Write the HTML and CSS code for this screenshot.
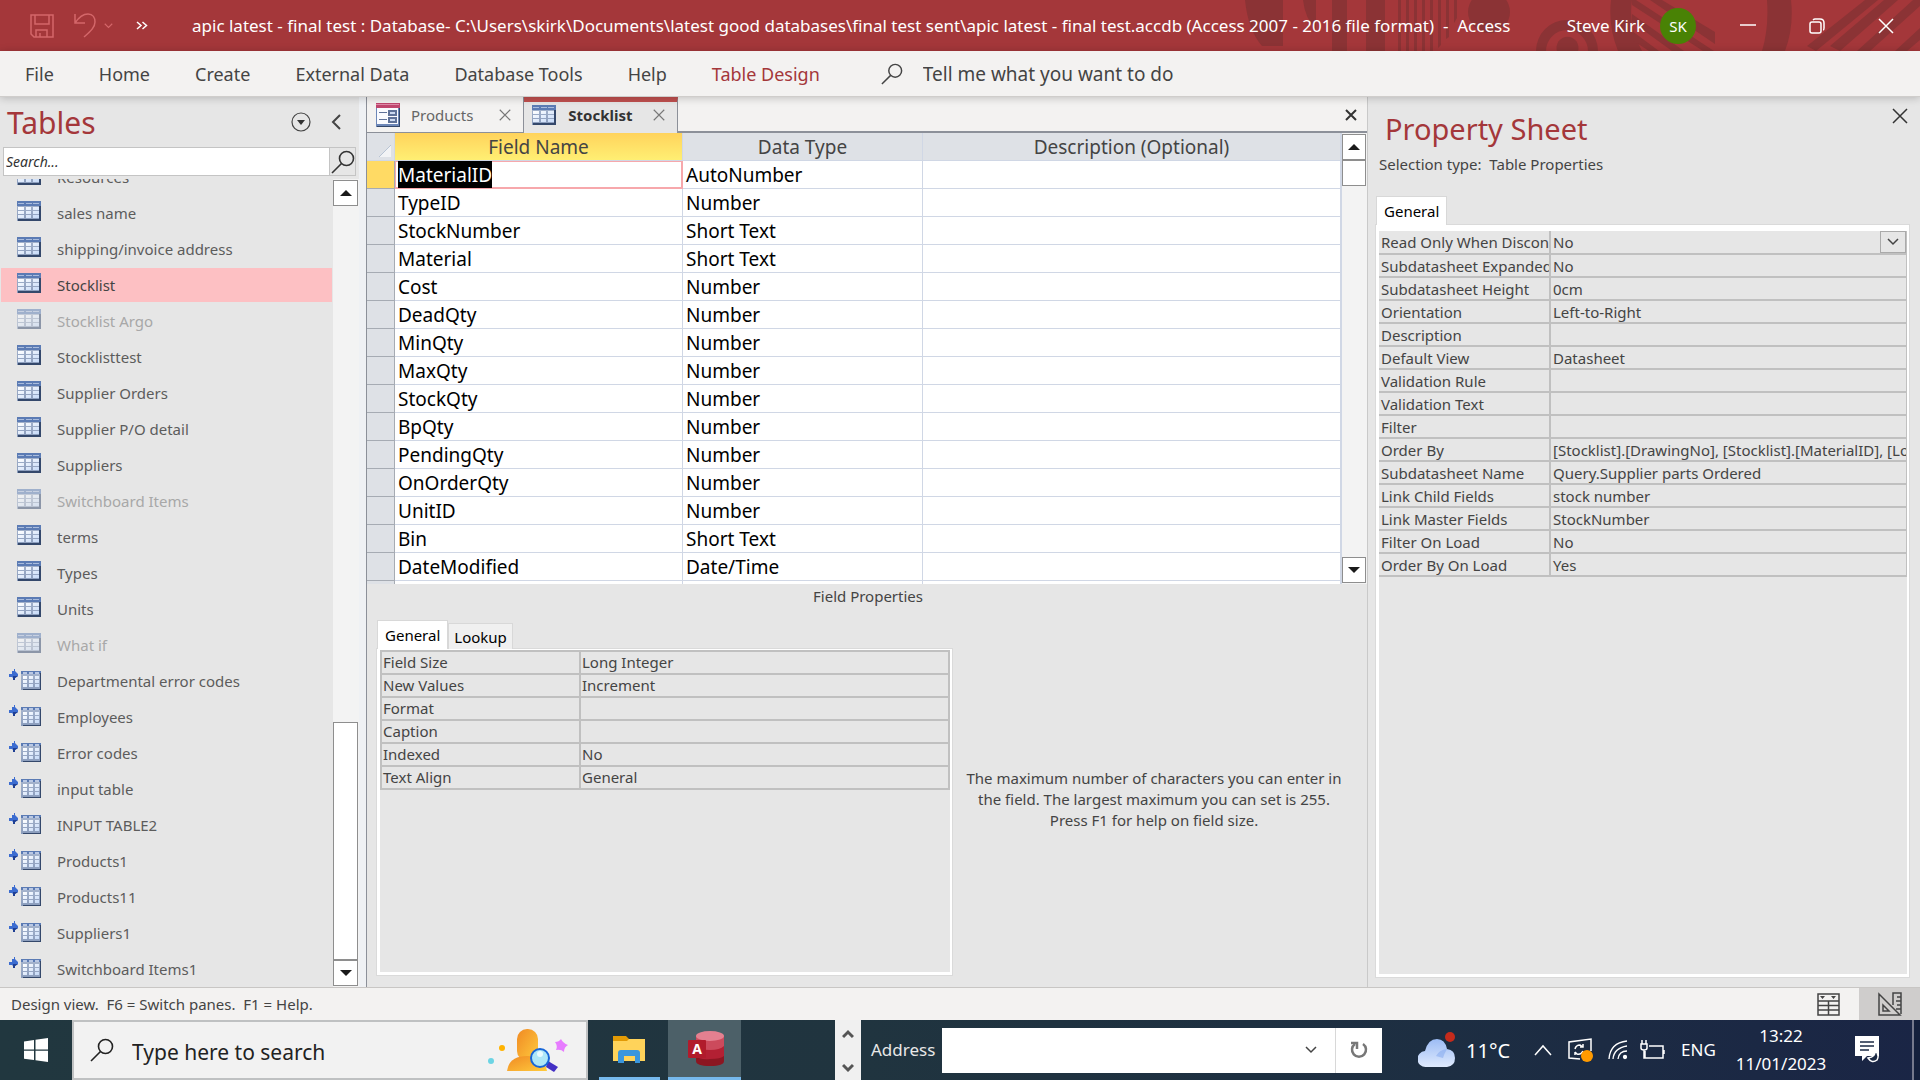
FILE: index.html
```html
<!DOCTYPE html>
<html lang="en">
<head>
<meta charset="utf-8">
<title>apic latest - final test - Access</title>
<link rel="stylesheet" href="styles.css">
</head>
<body>
<svg class="defs" aria-hidden="true">
  <defs>
    <linearGradient id="cell" x1="0" y1="0" x2="1" y2="1"><stop offset="0" stop-color="#ffffff"/><stop offset="1" stop-color="#c6daf8"/></linearGradient>
    <linearGradient id="bodyBlue" x1="0" y1="0" x2="0" y2="1"><stop offset="0" stop-color="#a9b7cf"/><stop offset="1" stop-color="#8a9cbc"/></linearGradient>
    <symbol id="i-table" viewBox="0 0 24 20">
      <path fill="url(#bodyBlue)" d="M0 0h24v20H0z"/><path fill="#5b7bb4" d="M0 0h24v5H0z"/><path fill="#a9bcdd" d="M1 2h6v1H1zM9 2h6v1H9zM16 2h6v1h-6z"/>
      <path fill="#34486b" d="M22 5h2v15H1v-2h21z"/>
      <path fill="url(#cell)" d="M1 6h6v3H1zM9 6h5v3H9zM16 6h6v3h-6zM1 10h6v3H1zM9 10h5v3H9zM16 10h6v3h-6zM1 14h6v3H1zM9 14h5v3H9zM16 14h6v3h-6z"/>
    </symbol>
    <symbol id="i-linked" viewBox="0 0 32 24">
      <path fill="#3c6cd0" d="M0 5h3V2h2V0h1v2l3 3v2L6 9v2H4V9L3 8H0z"/><path fill="#1f3f93" d="M4 7h5L6 9v2H4z"/>
      <path fill="url(#bodyBlue)" d="M12 2h20v19H12z"/><path fill="#5b7bb4" d="M12 2h20v3H12z"/><path fill="#b9c8e4" d="M14 3h4v2h-4zM20 3h4v2h-4zM26 3h4v2h-4z"/>
      <path fill="#34486b" d="M31 4h1v17H14v-1h17z"/>
      <path fill="url(#cell)" d="M14 7h4v3h-4zM20 7h4v3h-4zM26 7h4v3h-4zM14 11h4v3h-4zM20 11h4v3h-4zM26 11h4v3h-4zM14 15h4v3h-4zM20 15h4v3h-4zM26 15h4v3h-4z"/>
    </symbol>
    <symbol id="i-up" viewBox="0 0 12 6"><path fill="#1a1a1a" d="M0 6h12L6 0z"/></symbol>
    <symbol id="i-down" viewBox="0 0 12 6"><path fill="#1a1a1a" d="M0 0h12L6 6z"/></symbol>
    <symbol id="i-x" viewBox="0 0 16 16"><path fill="none" stroke="currentColor" stroke-width="1.5" d="M1 1l14 14M15 1L1 15"/></symbol>
    <symbol id="i-search" viewBox="0 0 24 24"><g fill="none" stroke="currentColor" stroke-width="1.6"><circle cx="15.500" cy="8.500" r="7"/><path d="M10.500 13.500L1 23"/></g></symbol>
    <symbol id="i-chev" viewBox="0 0 12 8"><path fill="none" stroke="currentColor" stroke-width="1.5" d="M1 1l5 5 5-5"/></symbol>
  </defs>
</svg>

<header class="titlebar">
  <svg class="decor" viewBox="0 0 680 51" aria-hidden="true">
    <g fill="#8b3335">
      <path d="M5 0h38v46H22Q8 30 5 0zM63 0h13v30Q65 18 63 0zM92 0h15v51H92zM126 0h19v51h-19z"/>
      <path d="M158 0h3v51h-3zM166 0h3v51h-3zM174 0h3v51h-3zM182 0h3v51h-3zM190 0h3v51h-3zM198 0h3v45l-3 3zM206 0h3v37l-3 2zM214 0h3v18l-3 5z"/>
      <circle cx="249" cy="12" r="21"/>
      <path d="M296 51a31 31 0 1 1 62 0h-10a21 21 0 1 0-42 0z"/><path d="M317 51a11 11 0 1 1 21 0z"/>
      <path d="M371 0q-3 26 7 51h24q-14-24-10-51zM527 0q2 28-5 51h23q9-24 6-51z"/>
      <path d="M396 0l78 51h-11L392 5v-5zM410 0l65 44v-12L422 0zM392 14l52 37h-12L392 22zM392 31l27 20h-10l-17-11z"/>
      <path d="M567 46l58-46h13l-62 51zM590 46l54-46h14l-58 51zM617 51l56-51h7v6l-50 45zM655 51l25-23v12l-13 11z"/>
    </g>
  </svg>
  <div class="quick">
    <button aria-label="Save"><svg width="24" height="24" viewBox="0 0 24 24" fill="none" stroke="#d4676a" stroke-width="1.5"><path d="M1 1h22v22H4l-3-3zM5 1v9h14V1M6 23v-7h11v7M10 19v4"/></svg></button>
    <button aria-label="Undo"><svg width="22" height="25" viewBox="0 0 22 25" fill="none" stroke="#d4676a" stroke-width="1.500"><path d="M1 1v9h10M1 10C5 4 10 1 14 1c5 0 7 4 7 8 0 5-4 9-11 15"/></svg></button>
    <button class="small" aria-label="Undo options"><svg width="9" height="6" viewBox="0 0 12 8" color="#d4676a"><use href="#i-chev"/></svg></button>
    <button aria-label="Customize toolbar"><svg width="12" height="9" viewBox="0 0 12 9" fill="none" stroke="#fff" stroke-width="1.500"><path d="M1 1l4 3.500-4 3.500M6.500 1l4 3.500-4 3.500"/></svg></button>
  </div>
  <div class="title">apic latest - final test : Database- C:\Users\skirk\Documents\latest good databases\final test sent\apic latest - final test.accdb (Access 2007 - 2016 file format)&nbsp; -&nbsp; Access</div>
  <div class="account"><span>Steve Kirk</span><span class="avatar">SK</span></div>
  <div class="winbtns">
    <button aria-label="Minimize"><svg width="16" height="16"><path d="M0 7h16" stroke="#fff" stroke-width="1.500"/></svg></button>
    <button aria-label="Restore"><svg width="16" height="16" fill="none" stroke="#fff" stroke-width="1.500"><rect x="1" y="4" width="11" height="11" rx="2"/><path d="M4 2q1-1 2-1h5q4 0 4 4v5q0 2-1 2"/></svg></button>
    <button aria-label="Close"><svg width="16" height="16"><use href="#i-x"/></svg></button>
  </div>
</header>

<nav class="menubar">
  <button>File</button><button>Home</button><button>Create</button><button>External Data</button><button>Database Tools</button><button>Help</button><button class="current">Table Design</button>
  <label class="tell"><svg width="22" height="22" viewBox="0 0 24 24"><use href="#i-search"/></svg><input type="text" placeholder="Tell me what you want to do"></label>
</nav>

<main class="work">
  <aside class="nav">
    <div class="nav-head">
      <h2>Tables</h2>
      <button aria-label="Filter list"><svg width="20" height="20" fill="none" stroke="#444" stroke-width="1.200"><circle cx="10" cy="10" r="9"/><path d="M6 8h8l-4 5z" fill="#333" stroke="none"/></svg></button>
      <button aria-label="Collapse pane"><svg width="10" height="16" fill="none" stroke="#444" stroke-width="2"><path d="M9 1L2 8l7 7"/></svg></button>
    </div>
    <div class="nav-search">
      <input type="text" placeholder="Search..." aria-label="Search">
      <button aria-label="Search"><svg width="24" height="24"><use href="#i-search"/></svg></button>
    </div>
    <div class="nav-body">
      <ul class="nav-list">
        <li><button><svg><use href="#i-table"/></svg>Resources</button></li>
        <li><button><svg><use href="#i-table"/></svg>sales name</button></li>
        <li><button><svg><use href="#i-table"/></svg>shipping/invoice address</button></li>
        <li><button class="selected"><svg><use href="#i-table"/></svg>Stocklist</button></li>
        <li><button class="hid"><svg><use href="#i-table"/></svg>Stocklist Argo</button></li>
        <li><button><svg><use href="#i-table"/></svg>Stocklisttest</button></li>
        <li><button><svg><use href="#i-table"/></svg>Supplier Orders</button></li>
        <li><button><svg><use href="#i-table"/></svg>Supplier P/O detail</button></li>
        <li><button><svg><use href="#i-table"/></svg>Suppliers</button></li>
        <li><button class="hid"><svg><use href="#i-table"/></svg>Switchboard Items</button></li>
        <li><button><svg><use href="#i-table"/></svg>terms</button></li>
        <li><button><svg><use href="#i-table"/></svg>Types</button></li>
        <li><button><svg><use href="#i-table"/></svg>Units</button></li>
        <li><button class="hid"><svg><use href="#i-table"/></svg>What if</button></li>
        <li><button class="linked"><svg><use href="#i-linked"/></svg>Departmental error codes</button></li>
        <li><button class="linked"><svg><use href="#i-linked"/></svg>Employees</button></li>
        <li><button class="linked"><svg><use href="#i-linked"/></svg>Error codes</button></li>
        <li><button class="linked"><svg><use href="#i-linked"/></svg>input table</button></li>
        <li><button class="linked"><svg><use href="#i-linked"/></svg>INPUT TABLE2</button></li>
        <li><button class="linked"><svg><use href="#i-linked"/></svg>Products1</button></li>
        <li><button class="linked"><svg><use href="#i-linked"/></svg>Products11</button></li>
        <li><button class="linked"><svg><use href="#i-linked"/></svg>Suppliers1</button></li>
        <li><button class="linked"><svg><use href="#i-linked"/></svg>Switchboard Items1</button></li>
      </ul>
      <div class="scroll">
        <button aria-label="Scroll up"><svg width="12" height="6"><use href="#i-up"/></svg></button>
        <div class="track nav-track"><div class="thumb"></div></div>
        <button aria-label="Scroll down"><svg width="12" height="6"><use href="#i-down"/></svg></button>
      </div>
    </div>
  </aside>

  <section class="doc">
    <div class="tabs">
      <div class="tab"><svg width="24" height="24" viewBox="0 0 24 24"><path fill="#6d87b8" d="M0 0h24v24H0z"/><path fill="#fafbff" d="M1 5h21v16H1z"/><path fill="#c0476f" d="M0 0h24v5H0z"/><path fill="#e08aa8" d="M0 1h23v1H0z"/><path fill="#5f7299" d="M3 9h8v1H3zM3 16h8v1H3zM12 7h9v6h-9zM12 14h9v6h-9z"/><path fill="#cbd8f0" d="M14 9h5v2h-5zM14 16h5v2h-5z"/><path fill="#34486b" d="M23 5h1v19H1v-1h22z"/></svg><button class="name">Products</button><button class="x" aria-label="Close Products"><svg width="12" height="12"><use href="#i-x"/></svg></button></div>
      <div class="tab active"><svg width="24" height="20"><use href="#i-table"/></svg><button class="name">Stocklist</button><button class="x" aria-label="Close Stocklist"><svg width="12" height="12"><use href="#i-x"/></svg></button></div>
      <button class="closeall" aria-label="Close"><svg width="12" height="12" viewBox="0 0 12 12"><path fill="none" stroke="#333" stroke-width="2" d="M1 1l10 10M11 1L1 11"/></svg></button>
    </div>
    <div class="upper">
      <div class="grid-wrap">
        <table class="grid">
          <colgroup><col class="c-sel"><col class="c-name"><col class="c-type"><col></colgroup>
          <thead><tr><th class="corner"><svg width="12" height="12"><path d="M12 0v12H0z" fill="#fff" opacity=".6"/><path d="M12 0L0 12" stroke="#b8c4d4"/></svg></th><th class="hot">Field Name</th><th>Data Type</th><th>Description (Optional)</th></tr></thead>
          <tbody>
            <tr class="cur"><td></td><td><mark>MaterialID</mark></td><td>AutoNumber</td><td></td></tr>
            <tr><td></td><td>TypeID</td><td>Number</td><td></td></tr>
            <tr><td></td><td>StockNumber</td><td>Short Text</td><td></td></tr>
            <tr><td></td><td>Material</td><td>Short Text</td><td></td></tr>
            <tr><td></td><td>Cost</td><td>Number</td><td></td></tr>
            <tr><td></td><td>DeadQty</td><td>Number</td><td></td></tr>
            <tr><td></td><td>MinQty</td><td>Number</td><td></td></tr>
            <tr><td></td><td>MaxQty</td><td>Number</td><td></td></tr>
            <tr><td></td><td>StockQty</td><td>Number</td><td></td></tr>
            <tr><td></td><td>BpQty</td><td>Number</td><td></td></tr>
            <tr><td></td><td>PendingQty</td><td>Number</td><td></td></tr>
            <tr><td></td><td>OnOrderQty</td><td>Number</td><td></td></tr>
            <tr><td></td><td>UnitID</td><td>Number</td><td></td></tr>
            <tr><td></td><td>Bin</td><td>Short Text</td><td></td></tr>
            <tr><td></td><td>DateModified</td><td>Date/Time</td><td></td></tr>
            <tr><td></td><td></td><td></td><td></td></tr>
          </tbody>
        </table>
      </div>
      <div class="scroll">
        <button aria-label="Scroll up"><svg width="12" height="6"><use href="#i-up"/></svg></button>
        <div class="track"><div class="thumb"></div></div>
        <button aria-label="Scroll down"><svg width="12" height="6"><use href="#i-down"/></svg></button>
      </div>
    </div>
    <div class="lower">
      <h3>Field Properties</h3>
      <div class="lower-body">
        <div class="tabset">
          <div class="ptabs"><button class="on">General</button><button>Lookup</button></div>
          <div class="panel">
            <table class="props boxed">
              <colgroup><col class="c-field"><col></colgroup>
              <tbody>
                <tr><th>Field Size</th><td>Long Integer</td></tr>
                <tr><th>New Values</th><td>Increment</td></tr>
                <tr><th>Format</th><td></td></tr>
                <tr><th>Caption</th><td></td></tr>
                <tr><th>Indexed</th><td>No</td></tr>
                <tr><th>Text Align</th><td>General</td></tr>
              </tbody>
            </table>
          </div>
        </div>
        <p class="help">The maximum number of characters you can enter in the field. The largest maximum you can set is 255. Press F1 for help on field size.</p>
      </div>
    </div>
  </section>

  <aside class="sheet">
    <button class="sheet-x" aria-label="Close"><svg width="16" height="16"><use href="#i-x"/></svg></button>
    <h2>Property Sheet</h2>
    <p class="seltype">Selection type:&nbsp; Table Properties</p>
    <div class="tabset">
      <div class="ptabs"><button class="on">General</button></div>
      <div class="panel">
        <table class="props">
          <colgroup><col class="c-prop"><col></colgroup>
          <tbody>
            <tr><th><label for="ro">Read Only When Disconnected</label></th><td><div class="pick"><select id="ro"><option>No</option></select><svg width="12" height="8"><use href="#i-chev"/></svg></div></td></tr>
            <tr><th>Subdatasheet Expanded</th><td>No</td></tr>
            <tr><th>Subdatasheet Height</th><td>0cm</td></tr>
            <tr><th>Orientation</th><td>Left-to-Right</td></tr>
            <tr><th>Description</th><td></td></tr>
            <tr><th>Default View</th><td>Datasheet</td></tr>
            <tr><th>Validation Rule</th><td></td></tr>
            <tr><th>Validation Text</th><td></td></tr>
            <tr><th>Filter</th><td></td></tr>
            <tr><th>Order By</th><td>[Stocklist].[DrawingNo], [Stocklist].[MaterialID], [Location]</td></tr>
            <tr><th>Subdatasheet Name</th><td>Query.Supplier parts Ordered</td></tr>
            <tr><th>Link Child Fields</th><td>stock number</td></tr>
            <tr><th>Link Master Fields</th><td>StockNumber</td></tr>
            <tr><th>Filter On Load</th><td>No</td></tr>
            <tr><th>Order By On Load</th><td>Yes</td></tr>
          </tbody>
        </table>
      </div>
    </div>
  </aside>
</main>

<div class="status">
  <span>Design view.&nbsp; F6 = Switch panes.&nbsp; F1 = Help.</span>
  <button aria-label="Datasheet View"><svg width="23" height="23" fill="none" stroke="#444" stroke-width="1.500"><path d="M1 1h21v21H1zM1 8h21M1 12.500h21M1 17h21M11.500 8v14"/><path d="M3 3h5l-2.500 3zM14 3h5l-2.500 3z" fill="#444" stroke="none"/></svg></button>
  <button class="on" aria-label="Design View"><svg width="24" height="24" fill="none" stroke="#444" stroke-width="1.500"><path d="M1 2v21h21zM5 13v6h6zM15 13V1h8v21M23 5h-4M23 9h-5M23 13h-4M23 17h-5"/></svg></button>
</div>

<footer class="taskbar">
  <button class="start" aria-label="Start"><svg width="24" height="24" fill="#fff"><path d="M0 3.500l10-1.500v9.500H0zM11.500 1.800L24 0v11.500H11.500zM0 12.800h10V22L0 20.700zM11.500 12.800H24V24l-12.500-1.800z"/></svg></button>
  <label class="tsearch"><svg width="24" height="24"><use href="#i-search"/></svg><input type="text" placeholder="Type here to search">
    <svg width="80" height="44" viewBox="0 0 80 44">
      <defs><linearGradient id="or" x1="0" y1="0" x2="1" y2="1"><stop offset="0" stop-color="#f08a24"/><stop offset="1" stop-color="#ffcb3d"/></linearGradient></defs>
      <circle cx="14" cy="20" r="3" fill="#ffb300"/><circle cx="3" cy="33" r="3" fill="#6cd4e4"/>
      <rect x="29" y="1" width="21" height="32" rx="10" fill="url(#or)"/><path d="M19 43q2-15 20-15t20 15z" fill="url(#or)"/>
      <path d="M60 33l10 6-4 5-8-5z" fill="#4330c4"/><circle cx="52" cy="30" r="9" fill="#aee6f7" stroke="#1766d8" stroke-width="2"/><circle cx="52" cy="26" r="3" fill="#e8fbff"/>
      <path d="M73 11q2 4 7 6-4 2-4 7-3-3-8-2 2-4-1-8 4 0 6-3z" fill="#e77cff"/>
    </svg>
  </label>
  <div class="apps">
    <button aria-label="File Explorer" class="app"><svg width="32" height="28" viewBox="0 0 32 28"><path fill="#e29a05" d="M0 0h13l3 3v5H0z"/><path fill="#ffd35a" d="M0 5h14l2-2h16v22H0z"/><path fill="#3a96dd" d="M5 27V17q0-3 3-3h16q3 0 3 3v10h-5v-7H11v7z"/></svg></button>
    <button aria-label="Access" class="app running"><svg width="36" height="36" viewBox="0 0 36 36"><path fill="#8c1622" d="M8 5v25q0 5 14 5t14-5V5z"/><path fill="#b32033" d="M8 5v20q4 4 14 3 11 0 14-3V5z"/><path fill="#cc4a5c" d="M8 5v10q4 4 14 4t14-4V5z"/><ellipse cx="22" cy="5" rx="14" ry="5" fill="#e48090"/><rect y="9" width="18" height="18" rx="1" fill="#b11b2c"/><text x="9" y="23" text-anchor="middle" font-size="14" font-weight="700" fill="#fff">A</text></svg></button>
  </div>
  <div class="updown"><button aria-label="Previous"><svg width="12" height="10" fill="none" stroke="#555" stroke-width="3"><path d="M1 8l5-5 5 5"/></svg></button><button aria-label="Next"><svg width="12" height="10" fill="none" stroke="#555" stroke-width="3"><path d="M1 2l5 5 5-5"/></svg></button></div>
  <div class="addr"><label for="addr">Address</label>
    <div class="addr-box"><input id="addr" type="text"><button class="drop" aria-label="History"><svg width="12" height="8"><use href="#i-chev"/></svg></button><button class="go" aria-label="Refresh"><svg width="18" height="18" fill="none" stroke="#777" stroke-width="2.500"><path d="M5 3a7 7 0 1 0 8 0"/><path d="M1 2h6v6" /></svg></button></div>
  </div>
  <div class="tray">
    <svg class="weather" width="38" height="36" viewBox="0 0 38 36"><defs><linearGradient id="cl" x1="0" y1="0" x2="0" y2="1"><stop offset="0" stop-color="#9cbcf5"/><stop offset="1" stop-color="#dfeafd"/></linearGradient></defs><path fill="url(#cl)" d="M8 35a8 8 0 0 1-1-16q3-12 12-12 8 0 10 10 8 1 8 9t-8 9z"/><path fill="#7fa6ee" opacity=".5" d="M18 24q3-6 11-7-3 5-4 9z"/><circle cx="32" cy="5" r="5" fill="#c42b1c"/></svg>
    <span class="temp">11°C</span>
    <svg class="t-up" width="18" height="12" fill="none" stroke="#fff" stroke-width="1.500"><path d="M1 11l8-9 8 9"/></svg>
    <svg class="t-upd" width="25" height="24" fill="none" stroke="#fff" stroke-width="1.500"><path d="M12 21l-11-1V4l22-3v12"/><path d="M7 11q1-4 5-4l3 2M15 6v3h-3M15 13q-2 4-6 3l-2-2M7 17v-3"/><circle cx="19" cy="18" r="6" fill="#ff9a00" stroke="none"/></svg>
    <svg class="t-wifi" width="20" height="20" fill="none" stroke="#fff" stroke-width="1.300"><path d="M1 19Q2 3 19 1M5 19Q6 8 19 6M10 19q1-8 9-8"/><circle cx="17" cy="17" r="1.500" fill="#fff"/></svg>
    <svg class="t-bat" width="25" height="20" fill="none" stroke="#fff" stroke-width="1.500"><path d="M9 6h14v12H5v-7M24 10v4M2 0v4M6 0v4M1 4h6v4q0 2-3 2t-3-2zM4 10v8h2"/></svg>
    <span class="lang">ENG</span>
    <span class="clock"><span>13:22</span><span>11/01/2023</span></span>
    <svg class="t-note" width="25" height="28"><path fill="#fff" d="M0 0h24v20H12l-5 5v-5H0z"/><path stroke="#1b2a44" stroke-width="1.500" d="M5 6h14M5 10h14M5 14h9"/><path d="M20 14q1 7-7 8 4 6 9 2 3-5-2-10z" fill="#1b2a44" stroke="#fff" stroke-width="1.500"/></svg>
  </div>
</footer>
</body>
</html>
```
FILE: styles.css
```css
* { box-sizing: border-box; }
body {
  margin: 0;
  height: 100vh;
  min-height: 900px;
  display: grid;
  grid-template-rows: 51px 46px 1fr 33px 60px;
  overflow: hidden;
  background: #e6e6e6;
  color: #444;
  font: 15px/20px "Noto Sans", "Open Sans", sans-serif;
}
button, input, select { font: inherit; color: inherit; border: 0; padding: 0; margin: 0; background: none; border-radius: 0; outline: 0; }
button { display: flex; align-items: center; justify-content: center; white-space: nowrap; }
h2, h3, p, ul { margin: 0; padding: 0; font-weight: 400; list-style: none; }
svg { display: block; flex: none; }
.defs { position: absolute; width: 0; height: 0; }

/* Title bar */
.titlebar { position: relative; display: flex; align-items: center; background: #a4373a; color: #fff; font-size: 17px; line-height: 24px; }
.titlebar > div { position: relative; }
.decor { position: absolute; right: 0; top: 0; width: 680px; height: 51px; }
.quick { display: flex; align-items: center; width: 192px; padding-left: 30px; gap: 20px; }
.quick .small { margin: 0 3px 0 -12px; }
.title { flex: 1; white-space: nowrap; }
.account { display: flex; align-items: center; gap: 15px; }
.avatar { width: 36px; height: 36px; border-radius: 50%; background: #498205; font-size: 15px; line-height: 36px; text-align: center; }
.winbtns { display: flex; margin-left: 17px; }
.winbtns button { width: 69px; height: 50px; }

/* Menu */
.menubar { position: relative; z-index: 2; display: flex; align-items: center; gap: 45px; padding-left: 25px; background: #f3f2f1; border-bottom: 1px solid #cfcdcb; box-shadow: 0 1px 8px rgba(0, 0, 0, .22); font-size: 18px; line-height: 26px; }
.menubar .current { color: #a4373a; }
.tell { display: flex; align-items: center; gap: 20px; margin-left: 16px; font-size: 19px; }
.tell input { width: 300px; height: 30px; }
input::placeholder { color: inherit; opacity: 1; }

/* Workspace */
.work { display: flex; min-height: 0; }
.nav { flex: none; width: 366px; display: flex; flex-direction: column; border-right: 7px solid #eff1f4; }
.nav-head { display: flex; align-items: center; height: 50px; padding: 0 18px 0 7px; gap: 20px; }
.nav-head h2 { flex: 1; font-size: 30px; line-height: 40px; padding-top: 2px; color: #a4373a; }
.nav-search { display: flex; margin: 0 3px 3px; height: 29px; background: #fff; border: 1px solid #c4c4c4; }
.nav-search input { flex: 1; min-width: 0; padding-left: 2px; font-style: italic; font-size: 14px; color: #333; }
.nav-search button { width: 26px; background: #e6e6e6; border-left: 1px solid #c4c4c4; color: #333; }
.nav-body { flex: 1; min-height: 0; display: flex; }
.nav-list { flex: 1; display: flex; flex-direction: column; justify-content: flex-end; overflow: hidden; }
.nav-list li { flex: none; height: 36px; padding: 1px; }
.nav-list button { width: 100%; height: 34px; justify-content: flex-start; gap: 16px; padding-left: 16px; color: #5c5c5c; }
.nav-list svg { width: 24px; height: 20px; margin-bottom: 4px; }
.nav-list .linked { padding-left: 8px; }
.nav-list .linked svg { width: 32px; height: 24px; margin: 0; }
.nav-list .selected { background: #fdc0c3; color: #444; }
.nav-list .hid { color: #a8a8a8; }
.nav-list .hid svg { opacity: .5; }

.scroll { flex: none; width: 26px; display: flex; flex-direction: column; padding: 1px 1px 1px 0; background: #f3f3f3; }
.scroll button { height: 26px; background: #fff; border: 1px solid #8e8e8e; }
.track { flex: 1; display: flex; flex-direction: column; }
.thumb { height: 26px; background: #fff; border: 1px solid #8e8e8e; }
.nav-track { justify-content: flex-end; }
.nav-track .thumb { height: 238px; }

/* Document */
.doc { flex: 1; min-width: 0; display: flex; flex-direction: column; border-left: 1px solid #8c9099; border-right: 1px solid #c9c9c9; }
.tabs { flex: none; display: flex; height: 36px; background: linear-gradient(#8c9099, #8c9099) bottom / 100% 2px no-repeat #f3f2f1; }
.tab { display: flex; align-items: center; height: 36px; padding: 0 12px 0 9px; border-right: 1px solid #8c9099; border-bottom: 1px solid #8c9099; background: #f3f2f1; color: #666; }
.tab .name { margin: 0 26px 0 11px; }
.tab.active { border-top: 5px solid #c0504f; border-bottom: 0; background: #e6e6e6; color: #333; padding: 0 12px 5px 8px; }
.tab.active .name { font-weight: 700; margin: 0 20px 0 12px; }
.tab .x { color: #777; }
.closeall { margin: 0 10px 0 auto; }
.upper { flex: none; height: 451px; display: flex; }
.grid-wrap { flex: 1; min-width: 0; overflow: hidden; background: #fff; }
.upper .scroll { border-left: 1px solid #d0d7e5; }
.grid { width: 100%; table-layout: fixed; border-collapse: separate; border-spacing: 0; font-size: 19px; line-height: 25px; color: #000; }
.grid th, .grid td { height: 28px; padding: 2px 3px 0; border: solid #d0d7e5; border-width: 0 1px 1px 0; white-space: nowrap; }
.grid th { background: #dee1e6; color: #444; font-weight: 400; text-align: center; }
.grid .hot { background: linear-gradient(#ffd35c, #ffef73); }
.grid td:first-child { background: #dee1e6; border-color: #a6abb3; }
.grid .cur td:first-child { background: #ffda64; }
.grid .cur td:nth-child(2) { padding-top: 0; box-shadow: inset 0 0 0 1px #f7a8ac; border-color: #f7a8ac; }
.grid .corner svg { margin-left: auto; margin-top: 6px; }
.c-sel { width: 28px; }
.c-name { width: 288px; }
.c-type { width: 240px; }
mark { display: inline-block; height: 27px; line-height: 29px; background: #000; color: #fff; vertical-align: top; }

.lower { flex: 1; min-height: 0; display: flex; flex-direction: column; padding: 2px 21px 12px 10px; }
.lower h3 { font-size: 15px; text-align: center; padding-left: 13px; }
.lower-body { flex: 1; display: flex; align-items: stretch; gap: 10px; margin-top: 14px; }
.lower .tabset { flex: 0 0 575px; }
.tabset { display: flex; flex-direction: column; }
.ptabs { position: relative; z-index: 1; display: flex; align-items: flex-end; color: #000; height: 29px; }
.ptabs button { height: 26px; padding: 0 5px; background: #f0f0f0; border: 1px solid #d8d8d8; border-bottom: 0; }
.ptabs .on { height: 29px; padding: 0 7px; background: #fff; }
.panel { flex: 1; border: solid #fff; border-width: 1px 2px 3px 3px; background: #e6e6e6; box-shadow: 0 0 0 1px #dadada; }
.props { width: 100%; table-layout: fixed; border-collapse: collapse; line-height: 20px; }
.props th, .props td { height: 23px; padding: 0 2px; overflow: hidden; white-space: nowrap; text-align: left; font-weight: 400; border: 2px solid #c0c0c0; border-top-width: 0; }
.props th { padding-right: 0; border-left: 0; }
.props td { border-right-width: 1px; }
.boxed th, .boxed td { border: 2px solid #c0c0c0; padding: 0 1px 1px; }
.c-field { width: 199px; }
.c-prop { width: 171px; }
.help { flex: 1; align-self: center; text-align: center; line-height: 21px; padding-top: 4px; }

/* Property sheet */
.sheet { flex: none; width: 552px; position: relative; display: flex; flex-direction: column; padding: 14px 11px 10px 8px; }
.sheet-x { position: absolute; right: 12px; top: 11px; color: #333; }
.sheet h2 { font-size: 29px; line-height: 36px; color: #a4373a; padding-left: 9px; }
.seltype { margin: 7px 0 22px 3px; }
.sheet .tabset { flex: 1; }
.sheet .panel { border-top-width: 6px; }
.pick { display: flex; align-items: center; position: relative; height: 21px; margin-right: -2px; }
.pick select { flex: 1; appearance: none; height: 21px; }
.pick svg { box-sizing: content-box; padding: 6px; border: 1px solid #aaa; }

/* Status bar */
.status { display: flex; align-items: center; padding-left: 11px; background: #f3f2f1; border-top: 1px solid #c8c6c4; }
.status span { flex: 1; }
.status button { width: 61px; height: 32px; }
.status .on { background: #cfcdcc; }

/* Taskbar */
.taskbar { display: flex; background: linear-gradient(90deg, #21373f, #20343f 45%, #1d2e42 75%, #1a2545); color: #fff; }
.start { width: 72px; }
.tsearch { flex: none; width: 516px; display: flex; align-items: center; gap: 18px; padding: 0 18px 0 16px; background: #f2f2f2; border: 2px solid #bfc1c2; color: #222; font-size: 21px; }
.tsearch input { flex: 1; min-width: 0; height: 40px; padding-top: 3px; }
.apps { flex: 1; display: flex; min-width: 160px; }
.app { width: 80px; padding-left: 2px; }
.app:first-child { background: linear-gradient(#76b9ed, #76b9ed) 11px bottom / 61px 3px no-repeat; }
.app.running { width: 73px; border-bottom: 3px solid #76b9ed; background: #4c6068; }
.updown { flex: none; width: 26px; display: flex; flex-direction: column; justify-content: space-between; align-items: center; padding: 9px 0 7px; background: #f0f0f0; }
.addr { flex: none; display: flex; align-items: center; gap: 7px; width: 521px; padding-left: 10px; font-size: 17px; color: #e8e8e8; }
.addr-box { flex: 1; min-width: 0; height: 45px; display: flex; background: #fff; color: #444; }
.addr-box input { flex: 1; min-width: 0; }
.drop { width: 49px; }
.go { width: 47px; border-left: 1px solid #d8d8d8; }
.tray { flex: none; width: 538px; display: flex; align-items: center; padding-left: 36px; font-size: 17px; border-right: 6px solid #14203c; box-shadow: inset -2px 0 #75798c; }
.temp { font-size: 20px; line-height: 28px; padding-top: 2px; margin: 0 24px 0 10px; }
.t-upd { margin: 0 15px 0 16px; }
.t-bat { margin: 0 16px 0 12px; }
.clock { display: flex; flex-direction: column; align-items: center; line-height: 28px; margin: 0 29px 0 20px; }
```
